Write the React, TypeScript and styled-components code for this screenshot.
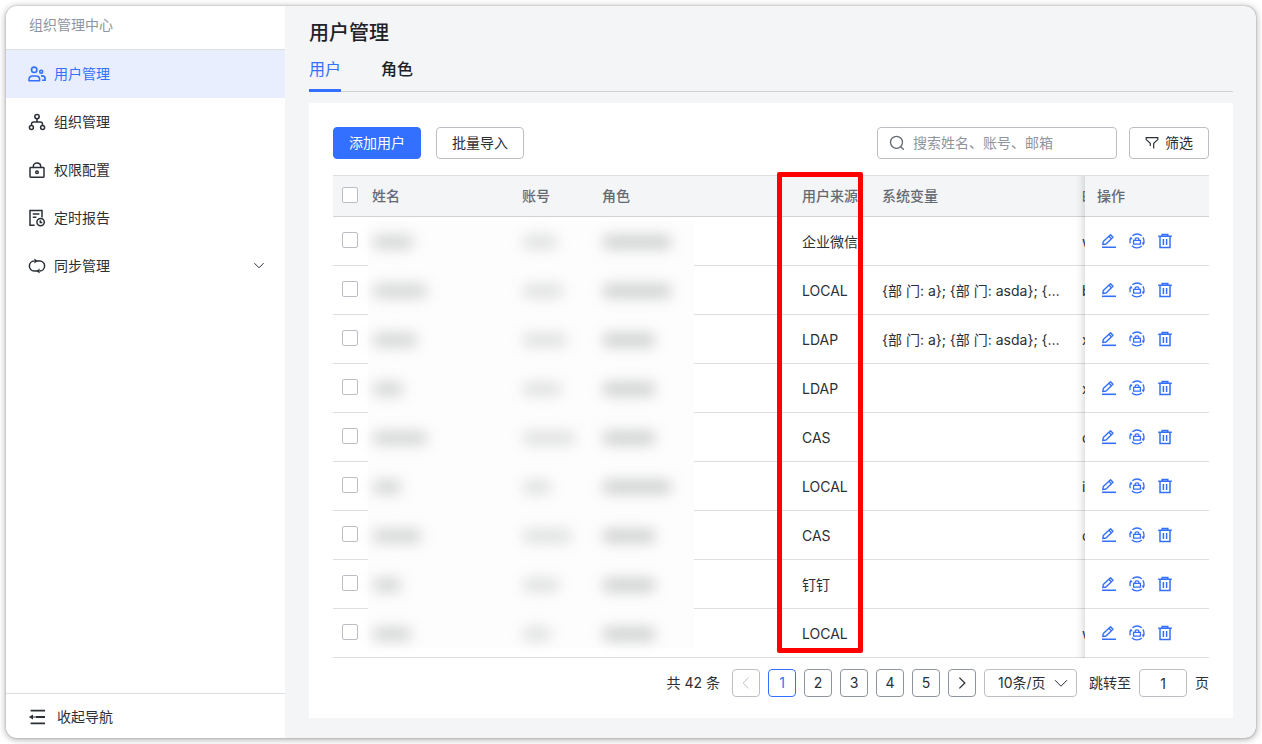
import React from "react";
import styled, { createGlobalStyle, css } from "styled-components";

const color = {
  text: "#2b2f36",
  title: "#1f2329",
  muted: "#646a73",
  faint: "#8f959e",
  blue: "#3370ff",
  active: "#e9eeff",
  page: "#f4f5f7",
  line: "#dcdee1",
  control: "#bbbfc4",
};

const GlobalStyle = createGlobalStyle`
  *, *::before, *::after { box-sizing: border-box; }
  body {
    margin: 0;
    background: #fff;
    color: ${color.text};
    font: 14px/20px Inter, "Noto Sans CJK SC", sans-serif;
  }
  button, input, select { font: inherit; color: inherit; }
  svg { display: block; flex: none; }
`;

const Page = styled.div`
  min-height: 100vh;
  padding: 6px;
  display: flex;
`;

const Window = styled.div`
  flex: 1;
  min-width: 0;
  display: flex;
  overflow: hidden;
  border-radius: 11px;
  background: ${color.page};
  box-shadow: 0 0 1px rgba(0, 0, 0, 0.5), 0 1px 7px rgba(0, 0, 0, 0.38);
`;

const Sidebar = styled.aside`
  flex: none;
  width: 279px;
  display: flex;
  flex-direction: column;
  background: #fff;
`;

const SidebarTitle = styled.div`
  height: 44px;
  padding: 9px 23px 0;
  border-bottom: 1px solid ${color.line};
  color: ${color.faint};
`;

const Nav = styled.nav`
  flex: 1;
`;

const NavItem = styled.a<{ $active?: boolean }>`
  display: flex;
  align-items: center;
  gap: 8px;
  height: 48px;
  padding: 0 20px 0 22px;
  color: ${(p) => (p.$active ? color.blue : color.text)};
  background: ${(p) => (p.$active ? color.active : "transparent")};
  text-decoration: none;
`;

const NavLabel = styled.span`
  flex: 1;
`;

const CollapseButton = styled.button`
  display: flex;
  align-items: center;
  gap: 11px;
  height: 45px;
  padding: 2px 22px 0;
  border: 0;
  border-top: 1px solid ${color.line};
  background: none;
`;

const Main = styled.main`
  flex: 1;
  min-width: 0;
  display: flex;
  flex-direction: column;
  padding: 13px 23px 20px 24px;
`;

const Title = styled.h1`
  margin: 0;
  font-size: 20px;
  line-height: 28px;
  font-weight: 500;
  color: ${color.title};
`;

const Tabs = styled.div`
  display: flex;
  gap: 40px;
  height: 40px;
  margin: 5px 0 11px;
  border-bottom: 1px solid #d0d3d6;
`;

const Tab = styled.button<{ $active?: boolean }>`
  height: 40px;
  padding: 0 0 3px;
  border: 0;
  border-bottom: 3px solid ${(p) => (p.$active ? color.blue : "transparent")};
  background: none;
  font-size: 16px;
  font-weight: ${(p) => (p.$active ? 400 : 500)};
  color: ${(p) => (p.$active ? color.blue : color.title)};
`;

const Card = styled.section`
  flex: 1;
  padding: 24px 24px 21px;
  background: #fff;
`;

const Toolbar = styled.div`
  display: flex;
  align-items: center;
  margin-bottom: 16px;
`;

const Spacer = styled.div`
  flex: 1;
`;

const Button = styled.button<{ $primary?: boolean }>`
  display: flex;
  align-items: center;
  justify-content: center;
  gap: 6px;
  height: 32px;
  padding: 0 15px;
  margin-right: 15px;
  border: 1px solid ${(p) => (p.$primary ? color.blue : color.control)};
  border-radius: 4px;
  background: ${(p) => (p.$primary ? color.blue : "#fff")};
  color: ${(p) => (p.$primary ? "#fff" : color.text)};
  &:last-child { margin-right: 0; }
`;

const Search = styled.label`
  display: flex;
  align-items: center;
  gap: 8px;
  width: 240px;
  height: 32px;
  margin-right: 12px;
  padding: 0 11px;
  border: 1px solid ${color.control};
  border-radius: 4px;
  color: ${color.muted};
`;

const SearchInput = styled.input`
  flex: 1;
  min-width: 0;
  padding: 0;
  border: 0;
  outline: 0;
  background: none;
  &::placeholder { color: ${color.faint}; opacity: 1; }
`;

const TableArea = styled.div`
  position: relative;
`;

const Table = styled.table`
  width: 100%;
  table-layout: fixed;
  border-collapse: separate;
  border-spacing: 0;
`;

const Col = styled.col<{ $width?: number }>`
  ${(p) => p.$width && css`width: ${p.$width}px;`}
`;

const cell = css`
  padding: 2px 0 0 8px;
  border-bottom: 1px solid ${color.line};
  text-align: left;
  vertical-align: middle;
  white-space: nowrap;
`;

const HeadCell = styled.th`
  ${cell}
  height: 42px;
  padding-top: 0;
  border-top: 1px solid ${color.line};
  border-bottom-color: #d0d3d6;
  background: ${color.page};
  color: ${color.muted};
  font-weight: 500;
`;

const BodyCell = styled.td`
  ${cell}
  height: 49px;
`;

const clipped = css`
  overflow: hidden;
`;
const HeadClipped = styled(HeadCell)`${clipped}`;
const BodyClipped = styled(BodyCell)`${clipped}`;

const Ellipsis = styled.div`
  width: 184px;
  overflow: hidden;
  text-overflow: ellipsis;
`;

const pinned = css`
  position: relative;
  padding-left: 12px;
  &::before {
    content: "";
    position: absolute;
    top: 0;
    bottom: -1px;
    left: -10px;
    width: 10px;
    background: linear-gradient(to left, rgba(0, 0, 0, 0.11), rgba(0, 0, 0, 0.03) 50%, transparent);
  }
`;
const HeadPinned = styled(HeadCell)`${pinned}`;
const BodyPinned = styled(BodyCell)`
  ${pinned}
  padding-top: 0;
`;

const HeadCheck = styled(HeadCell)`
  padding: 0 0 2px 9px;
`;
const BodyCheck = styled(BodyCell)`
  padding: 0 0 2px 9px;
`;

const Checkbox = styled.input`
  appearance: none;
  display: block;
  width: 16px;
  height: 16px;
  margin: 0;
  border: 1px solid ${color.control};
  border-radius: 2px;
  background: #fff;
`;

const Actions = styled.div`
  display: flex;
  gap: 12px;
  padding-left: 4px;
`;

const IconButton = styled.button`
  padding: 0;
  border: 0;
  background: none;
  color: ${color.blue};
`;

const PrivacySheet = styled.div`
  position: absolute;
  top: 46px;
  bottom: 10px;
  left: 35px;
  width: 326px;
  background: #fdfdfd;
`;

const Smudge = styled.div<{ $width: number; $tone: number }>`
  position: relative;
  z-index: 1;
  width: ${(p) => p.$width}px;
  height: 14px;
  border-radius: 7px;
  background: rgba(70, 74, 74, ${(p) => p.$tone / 100});
  filter: blur(7px);
`;

const Highlight = styled.div`
  position: absolute;
  top: -3px;
  bottom: 5px;
  left: 444px;
  width: 86px;
  border: 5px solid #f00;
  border-radius: 2px;
  pointer-events: none;
`;

const Pagination = styled.div`
  display: flex;
  align-items: center;
  justify-content: flex-end;
  gap: 8px;
  margin-top: 11px;
`;

const Total = styled.span`
  margin-right: 4px;
`;

const PageButton = styled.button<{ $state?: "current" | "disabled" }>`
  display: flex;
  align-items: center;
  justify-content: center;
  width: 28px;
  height: 28px;
  padding: 0;
  border: 1px solid
    ${(p) => (p.$state === "current" ? color.blue : p.$state === "disabled" ? color.control : color.faint)};
  border-radius: 4px;
  background: #fff;
  color: ${(p) => (p.$state === "current" ? color.blue : p.$state === "disabled" ? color.control : color.text)};
`;

const SizeBox = styled.div`
  display: grid;
  align-items: center;
  width: 93px;
  height: 28px;
  & > * { grid-area: 1 / 1; }
  & > svg { justify-self: end; margin-right: 9px; pointer-events: none; }
`;

const SizeSelect = styled.select`
  appearance: none;
  width: 100%;
  height: 28px;
  padding: 0 13px;
  border: 1px solid ${color.control};
  border-radius: 4px;
  background: #fff;
`;

const Jump = styled.label`
  display: flex;
  align-items: center;
  gap: 8px;
  margin-left: 4px;
`;

const JumpInput = styled.input`
  width: 48px;
  height: 28px;
  padding: 0;
  border: 1px solid ${color.control};
  border-radius: 4px;
  text-align: center;
`;

type IconProps = { size?: number; stroke?: number; children: React.ReactNode };
const Icon = ({ size = 18, stroke = 1.4, children }: IconProps) => (
  <svg width={size} height={size} viewBox={`0 0 ${size} ${size}`} fill="none" stroke="currentColor" strokeWidth={stroke} aria-hidden="true">
    {children}
  </svg>
);

const UsersIcon = () => (
  <Icon stroke={1.6}>
    <circle cx="6.2" cy="4.8" r="2.7" />
    <path d="M1 15.8v-1.3c0-2 1.5-3.5 3.6-3.5h3.4c2.1 0 3.6 1.5 3.6 3.5v1.3z" strokeLinejoin="round" />
    <circle cx="13.2" cy="6.8" r="1.5" />
    <path d="M13 10.9h1.2c1.7 0 2.9 1.1 2.9 2.7v1.6h-3" />
  </Icon>
);
const OrgIcon = () => (
  <Icon stroke={1.5}>
    <circle cx="9" cy="3.6" r="2.2" />
    <circle cx="3.4" cy="14.4" r="2" />
    <circle cx="14.6" cy="14.4" r="2" />
    <path d="M9 6v2.8M3.5 12.2v-1c0-1.3.9-2.2 2.3-2.2h6.4c1.4 0 2.3.9 2.3 2.2v1" />
  </Icon>
);
const LockIcon = () => (
  <Icon stroke={1.5}>
    <rect x="2" y="6.6" width="14" height="9.6" rx="0.6" />
    <path d="M5.3 6.4V5.4c0-2 1.5-3.3 3.7-3.3s3.7 1.3 3.7 3.3v1" />
    <circle cx="9" cy="11.3" r="1.3" />
  </Icon>
);
const ReportIcon = () => (
  <Icon stroke={1.5}>
    <path d="M6.6 16.3H2V1.4h12v7" />
    <path d="M4.8 5h6.6M4.8 8.2h3.6" />
    <circle cx="12.6" cy="13.1" r="3.7" />
    <path d="M12.3 11.2v2.2h2" />
  </Icon>
);
const SyncIcon = () => (
  <Icon stroke={1.5}>
    <path d="M6.2 14A5 5 0 0 1 1.4 9a5 5 0 0 1 4.9-5M8 4h3.8a5 5 0 0 1 4.8 5 5 5 0 0 1-4.9 5M10 14H6.2" />
    <path d="M9.6 4 6.4 1.6v4.8zM8.4 14l3.2-2.4v4.8z" fill="currentColor" stroke="none" />
  </Icon>
);
const CollapseIcon = () => (
  <Icon stroke={1.8}>
    <path d="M2.6 2.6h14.4M8 9h9M2.6 15.4h14.4" />
    <path d="M.8 9 5 6.4v5.2z" fill="currentColor" stroke="none" />
    <path d="M4 9h4" strokeWidth="1.2" />
  </Icon>
);
const Chevron = ({ size = 12, stroke = 1, d }: { size?: number; stroke?: number; d: string }) => (
  <Icon size={size} stroke={stroke}>
    <path d={d} />
  </Icon>
);
const SearchIcon = () => (
  <Icon size={16} stroke={1.3}>
    <circle cx="7.5" cy="7.3" r="6" />
    <path d="m11.8 11.7 3 3" />
  </Icon>
);
const FilterIcon = () => (
  <Icon size={14} stroke={1.2}>
    <path d="M5.3 10V7.3L1.2 3.6V1.7h11.6v1.9L8.7 7.3v5.2" />
  </Icon>
);
const EditIcon = () => (
  <Icon size={16} stroke={1.4}>
    <path d="M1 14.3h14" strokeWidth="1.6" />
    <path d="m1.8 11.6.5-3.1 7.2-6.8 2.5 2.6-7 6.7zM8 3.3l2.5 2.6" strokeLinejoin="round" />
  </Icon>
);
const ResetIcon = () => (
  <Icon size={16} stroke={1.3}>
    <path d="M1.3 10.2A7 7 0 0 1 1.7 5M3.4 2.7a7 7 0 0 1 9.4.2M13.9 4.3a7 7 0 0 1 .4 6.6M12.8 13a7 7 0 0 1-9.9-.3" />
    <path d="m.3 6.4 1.6-3 1.7 2.8zM15.9 9.5l-1.7 2.9-1.6-2.9z" fill="currentColor" stroke="none" />
    <path d="M4.6 7.4h6.8v3.7H4.6zM6.1 7.3V6.2c0-.8.6-1.3 1.9-1.3s1.9.5 1.9 1.3v1.1" />
  </Icon>
);
const TrashIcon = () => (
  <Icon size={16} stroke={1.5}>
    <path d="M1.2 3.2h13.6M5.2 3V1.4h5.6V3M3 3.4v11h10v-11M6.4 5.9v6M9.6 5.9v6" />
  </Icon>
);

const navItems = [
  { label: "用户管理", icon: <UsersIcon />, active: true },
  { label: "组织管理", icon: <OrgIcon /> },
  { label: "权限配置", icon: <LockIcon /> },
  { label: "定时报告", icon: <ReportIcon /> },
  { label: "同步管理", icon: <SyncIcon />, expandable: true },
];

const columns = [31, 150, 80, 200, 80, 200, undefined, 124];
const variables = "{部 门: a}; {部 门: asda}; {部 门: b}";

type Row = { source: string; vars?: string; mail?: string; widths: [number, number, number] };
const rows: Row[] = [
  { source: "企业微信", mail: "w", widths: [42, 36, 70] },
  { source: "LOCAL", vars: variables, mail: "b", widths: [56, 42, 70] },
  { source: "LDAP", vars: variables, mail: "x", widths: [46, 46, 54] },
  { source: "LDAP", mail: "x", widths: [32, 40, 54] },
  { source: "CAS", mail: "c", widths: [56, 54, 54] },
  { source: "LOCAL", mail: "i", widths: [30, 30, 70] },
  { source: "CAS", mail: "c", widths: [50, 50, 54] },
  { source: "钉钉", widths: [30, 38, 54] },
  { source: "LOCAL", mail: "w", widths: [40, 30, 54] },
];

export default function App() {
  return (
    <>
      <GlobalStyle />
      <Page>
        <Window>
          <Sidebar>
            <SidebarTitle>组织管理中心</SidebarTitle>
            <Nav>
              {navItems.map((item) => (
                <NavItem key={item.label} href="#" $active={item.active}>
                  {item.icon}
                  <NavLabel>{item.label}</NavLabel>
                  {item.expandable && <Chevron d="M1.4 3.2 6 7.8l4.6-4.6" />}
                </NavItem>
              ))}
            </Nav>
            <CollapseButton type="button">
              <CollapseIcon />
              收起导航
            </CollapseButton>
          </Sidebar>
          <Main>
            <Title>用户管理</Title>
            <Tabs role="tablist">
              <Tab type="button" role="tab" aria-selected="true" $active>用户</Tab>
              <Tab type="button" role="tab" aria-selected="false">角色</Tab>
            </Tabs>
            <Card>
              <Toolbar>
                <Button type="button" $primary>添加用户</Button>
                <Button type="button">批量导入</Button>
                <Spacer />
                <Search>
                  <SearchIcon />
                  <SearchInput type="text" aria-label="搜索" placeholder="搜索姓名、账号、邮箱" />
                </Search>
                <Button type="button">
                  <FilterIcon />
                  筛选
                </Button>
              </Toolbar>
              <TableArea>
                <Table>
                  <colgroup>
                    {columns.map((width, i) => <Col key={i} $width={width} />)}
                  </colgroup>
                  <thead>
                    <tr>
                      <HeadCheck><Checkbox type="checkbox" aria-label="全选" /></HeadCheck>
                      <HeadCell>姓名</HeadCell>
                      <HeadCell>账号</HeadCell>
                      <HeadCell>角色</HeadCell>
                      <HeadCell>用户来源</HeadCell>
                      <HeadCell>系统变量</HeadCell>
                      <HeadClipped>邮箱</HeadClipped>
                      <HeadPinned>操作</HeadPinned>
                    </tr>
                  </thead>
                  <tbody>
                    {rows.map((row, i) => (
                      <tr key={i}>
                        <BodyCheck><Checkbox type="checkbox" aria-label="选择" /></BodyCheck>
                        <BodyCell><Smudge $width={row.widths[0]} $tone={22} /></BodyCell>
                        <BodyCell><Smudge $width={row.widths[1]} $tone={16} /></BodyCell>
                        <BodyCell><Smudge $width={row.widths[2]} $tone={25} /></BodyCell>
                        <BodyCell>{row.source}</BodyCell>
                        <BodyCell>{row.vars && <Ellipsis>{row.vars}</Ellipsis>}</BodyCell>
                        <BodyClipped>{row.mail}</BodyClipped>
                        <BodyPinned>
                          <Actions>
                            <IconButton type="button" aria-label="编辑"><EditIcon /></IconButton>
                            <IconButton type="button" aria-label="重置密码"><ResetIcon /></IconButton>
                            <IconButton type="button" aria-label="删除"><TrashIcon /></IconButton>
                          </Actions>
                        </BodyPinned>
                      </tr>
                    ))}
                  </tbody>
                </Table>
                <PrivacySheet />
                <Highlight />
              </TableArea>
              <Pagination>
                <Total>共 42 条</Total>
                <PageButton type="button" aria-label="上一页" $state="disabled">
                  <Chevron size={16} d="M10.6 2.6 5.2 8l5.4 5.4" />
                </PageButton>
                <PageButton type="button" $state="current">1</PageButton>
                {[2, 3, 4, 5].map((n) => <PageButton key={n} type="button">{n}</PageButton>)}
                <PageButton type="button" aria-label="下一页">
                  <Chevron size={16} stroke={1.3} d="M5.4 2.6 10.8 8l-5.4 5.4" />
                </PageButton>
                <SizeBox>
                  <SizeSelect aria-label="每页条数" defaultValue="10">
                    <option value="10">10条/页</option>
                  </SizeSelect>
                  <Chevron size={14} d="M1 4.2 7 10.2l6-6" />
                </SizeBox>
                <Jump>
                  跳转至
                  <JumpInput type="text" defaultValue="1" />
                  页
                </Jump>
              </Pagination>
            </Card>
          </Main>
        </Window>
      </Page>
    </>
  );
}
